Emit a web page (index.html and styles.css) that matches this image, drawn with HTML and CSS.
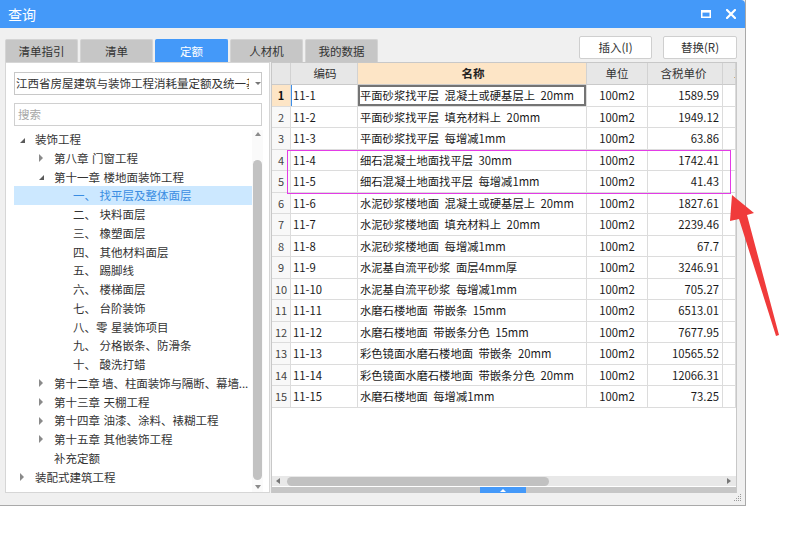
FILE: index.html
```html
<!DOCTYPE html>
<html lang="zh-CN">
<head>
<meta charset="utf-8">
<title>查询</title>
<link rel="stylesheet" href="styles.css">
</head>
<body>
<div class="window">
  <div class="titlebar">
    <span class="title">查询</span>
    <div class="win-btns">
      <svg class="ico" width="10" height="8" viewBox="0 0 10 8"><rect x="0.75" y="0.75" width="8.5" height="6.5" fill="none" stroke="#fff" stroke-width="1.5"/><rect x="0" y="0" width="10" height="2.6" fill="#fff"/></svg>
      <svg class="ico" width="10" height="10" viewBox="0 0 10 10"><path d="M1 1L9 9M9 1L1 9" stroke="#fff" stroke-width="2.2" stroke-linecap="square"/></svg>
    </div>
  </div>
  <div class="body">
    <div class="toolbar">
      <div class="tabs">
        <div class="tab">清单指引</div>
        <div class="tab">清单</div>
        <div class="tab active">定额</div>
        <div class="tab">人材机</div>
        <div class="tab">我的数据</div>
      </div>
      <div class="actions">
        <button class="btn">插入(I)</button>
        <button class="btn btn-wide">替换(R)</button>
      </div>
    </div>
    <div class="main">
      <div class="left">
        <div class="select">
          <span class="select-text">江西省房屋建筑与装饰工程消耗量定额及统一基价表</span>
          <span class="caret"></span>
        </div>
        <div class="search">搜索</div>
        <div class="tree">
          <div class="tree-list">
            <div class="node l0"><span class="tw"><i class="tri-open"></i></span><span class="lbl">装饰工程</span></div>
            <div class="node l1"><span class="tw"><i class="tri-closed"></i></span><span class="lbl">第八章 门窗工程</span></div>
            <div class="node l1"><span class="tw"><i class="tri-open"></i></span><span class="lbl">第十一章 楼地面装饰工程</span></div>
            <div class="node l2 selected"><span class="lbl">一、 找平层及整体面层</span></div>
            <div class="node l2"><span class="lbl">二、 块料面层</span></div>
            <div class="node l2"><span class="lbl">三、 橡塑面层</span></div>
            <div class="node l2"><span class="lbl">四、 其他材料面层</span></div>
            <div class="node l2"><span class="lbl">五、 踢脚线</span></div>
            <div class="node l2"><span class="lbl">六、 楼梯面层</span></div>
            <div class="node l2"><span class="lbl">七、 台阶装饰</span></div>
            <div class="node l2"><span class="lbl">八、零 星装饰项目</span></div>
            <div class="node l2"><span class="lbl">九、 分格嵌条、防滑条</span></div>
            <div class="node l2"><span class="lbl">十、 酸洗打蜡</span></div>
            <div class="node l1"><span class="tw"><i class="tri-closed"></i></span><span class="lbl tight">第十二章 墙、柱面装饰与隔断、幕墙...</span></div>
            <div class="node l1"><span class="tw"><i class="tri-closed"></i></span><span class="lbl">第十三章 天棚工程</span></div>
            <div class="node l1"><span class="tw"><i class="tri-closed"></i></span><span class="lbl">第十四章 油漆、涂料、裱糊工程</span></div>
            <div class="node l1"><span class="tw"><i class="tri-closed"></i></span><span class="lbl">第十五章 其他装饰工程</span></div>
            <div class="node l1"><span class="tw"></span><span class="lbl">补充定额</span></div>
            <div class="node l0"><span class="tw"><i class="tri-closed"></i></span><span class="lbl">装配式建筑工程</span></div>
          </div>
          <div class="vscroll">
            <i class="arr-up"></i>
            <div class="vthumb"></div>
            <i class="arr-down"></i>
          </div>
        </div>
      </div>
      <div class="right">
        <div class="grid">
          <div class="row head">
            <div class="c rn"></div>
            <div class="c code">编码</div>
            <div class="c name">名称</div>
            <div class="c unit">单位</div>
            <div class="c price">含税单价</div>
            <div class="c extra"><span class="extra-txt">工</span></div>
          </div>
          <div class="row current">
            <div class="c rn">1</div><div class="c code focus">11-1</div><div class="c name sel">平面砂浆找平层 混凝土或硬基层上 20mm</div><div class="c unit">100m2</div><div class="c price">1589.59</div><div class="c extra"></div>
          </div>
          <div class="row"><div class="c rn">2</div><div class="c code">11-2</div><div class="c name">平面砂浆找平层 填充材料上 20mm</div><div class="c unit">100m2</div><div class="c price">1949.12</div><div class="c extra"></div></div>
          <div class="row"><div class="c rn">3</div><div class="c code">11-3</div><div class="c name">平面砂浆找平层 每增减1mm</div><div class="c unit">100m2</div><div class="c price">63.86</div><div class="c extra"></div></div>
          <div class="row"><div class="c rn">4</div><div class="c code">11-4</div><div class="c name">细石混凝土地面找平层 30mm</div><div class="c unit">100m2</div><div class="c price">1742.41</div><div class="c extra"></div></div>
          <div class="row"><div class="c rn">5</div><div class="c code">11-5</div><div class="c name">细石混凝土地面找平层 每增减1mm</div><div class="c unit">100m2</div><div class="c price">41.43</div><div class="c extra"></div></div>
          <div class="row"><div class="c rn">6</div><div class="c code">11-6</div><div class="c name">水泥砂浆楼地面 混凝土或硬基层上 20mm</div><div class="c unit">100m2</div><div class="c price">1827.61</div><div class="c extra"></div></div>
          <div class="row"><div class="c rn">7</div><div class="c code">11-7</div><div class="c name">水泥砂浆楼地面 填充材料上 20mm</div><div class="c unit">100m2</div><div class="c price">2239.46</div><div class="c extra"></div></div>
          <div class="row"><div class="c rn">8</div><div class="c code">11-8</div><div class="c name">水泥砂浆楼地面 每增减1mm</div><div class="c unit">100m2</div><div class="c price">67.7</div><div class="c extra"></div></div>
          <div class="row"><div class="c rn">9</div><div class="c code">11-9</div><div class="c name">水泥基自流平砂浆 面层4mm厚</div><div class="c unit">100m2</div><div class="c price">3246.91</div><div class="c extra"></div></div>
          <div class="row"><div class="c rn">10</div><div class="c code">11-10</div><div class="c name">水泥基自流平砂浆 每增减1mm</div><div class="c unit">100m2</div><div class="c price">705.27</div><div class="c extra"></div></div>
          <div class="row"><div class="c rn">11</div><div class="c code">11-11</div><div class="c name">水磨石楼地面 带嵌条 15mm</div><div class="c unit">100m2</div><div class="c price">6513.01</div><div class="c extra"></div></div>
          <div class="row"><div class="c rn">12</div><div class="c code">11-12</div><div class="c name">水磨石楼地面 带嵌条分色 15mm</div><div class="c unit">100m2</div><div class="c price">7677.95</div><div class="c extra"></div></div>
          <div class="row"><div class="c rn">13</div><div class="c code">11-13</div><div class="c name">彩色镜面水磨石楼地面 带嵌条 20mm</div><div class="c unit">100m2</div><div class="c price">10565.52</div><div class="c extra"></div></div>
          <div class="row"><div class="c rn">14</div><div class="c code">11-14</div><div class="c name">彩色镜面水磨石楼地面 带嵌条分色 20mm</div><div class="c unit">100m2</div><div class="c price">12066.31</div><div class="c extra"></div></div>
          <div class="row"><div class="c rn">15</div><div class="c code">11-15</div><div class="c name">水磨石楼地面 每增减1mm</div><div class="c unit">100m2</div><div class="c price">73.25</div><div class="c extra"></div></div>
        </div>
        <div class="hscroll">
          <i class="arr-left"></i>
          <div class="hthumb"></div>
          <i class="arr-right"></i>
        </div>
        <div class="hgap"></div>
        <div class="splitter"><div class="split-btn"><i class="split-tri"></i></div></div>
      </div>
    </div>
    <div class="statusbar">
      <svg class="grip" width="8" height="8" viewBox="0 0 8 8">
        <rect x="6" y="0" width="1" height="1" fill="#9a9a9a"/>
        <rect x="4" y="2" width="1" height="1" fill="#9a9a9a"/><rect x="6" y="2" width="1" height="1" fill="#9a9a9a"/>
        <rect x="2" y="4" width="1" height="1" fill="#9a9a9a"/><rect x="4" y="4" width="1" height="1" fill="#9a9a9a"/><rect x="6" y="4" width="1" height="1" fill="#9a9a9a"/>
        <rect x="0" y="6" width="1" height="1" fill="#9a9a9a"/><rect x="2" y="6" width="1" height="1" fill="#9a9a9a"/><rect x="4" y="6" width="1" height="1" fill="#9a9a9a"/><rect x="6" y="6" width="1" height="1" fill="#9a9a9a"/>
      </svg>
    </div>
  </div>
  <div class="mark"></div>
</div>
<svg class="arrow" width="798" height="543" viewBox="0 0 798 543">
  <polygon points="732,195 754,213 747,215 779,335 776,336 739,219 730,221" fill="#f03b3b"/>
</svg>
</body>
</html>
```

FILE: styles.css
```css
* { box-sizing: border-box; }
html, body { margin: 0; padding: 0; }
body {
  width: 798px;
  height: 543px;
  overflow: hidden;
  position: relative;
  background: #fff;
  font-family: "Noto Sans CJK SC", "Microsoft YaHei", sans-serif;
  color: #333;
}

.window {
  position: relative;
  width: 746px;
  height: 506px;
  background: #f0f0f0;
  border-right: 1px solid #a9a9a9;
  border-bottom: 1px solid #a9a9a9;
  display: flex;
  flex-direction: column;
}

.titlebar {
  height: 28px;
  flex: none;
  background: #4499f9;
  border-top-right-radius: 4px;
  display: flex;
  align-items: center;
  justify-content: space-between;
  padding: 0 9px 0 8px;
  color: #fff;
}
.title { font-size: 14px; line-height: 28px; }
.win-btns { display: flex; align-items: center; gap: 15px; }
.ico { display: block; }

.body {
  flex: 1;
  display: flex;
  flex-direction: column;
  padding: 0 8px 0 5px;
}

.toolbar {
  height: 34px;
  flex: none;
  display: flex;
  justify-content: space-between;
}
.tabs { display: flex; gap: 2px; align-self: flex-end; }
.tab {
  width: 73px;
  height: 23px;
  background: #c6c6c6;
  border: 1px solid #d4d4d4;
  border-bottom: none;
  border-radius: 2px 2px 0 0;
  font-size: 11.5px;
  line-height: 22px;
  text-align: center;
  color: #333;
}
.tab.active { background: #4499f9; border-color: #4499f9; color: #fff; }

.actions { display: flex; gap: 11px; padding-top: 8px; }
.btn {
  width: 73px;
  height: 23px;
  padding: 0;
  background: #fff;
  border: 1px solid #cfcfcf;
  border-radius: 2px;
  font-family: inherit;
  font-size: 11.5px;
  color: #333;
  line-height: 21px;
}
.btn-wide { width: 74px; }

.main {
  height: 431px;
  flex: none;
  display: flex;
  gap: 1px;
}

/* left panel */
.left {
  width: 265px;
  flex: none;
  background: #fff;
  border: 1px solid #d6d6d6;
  padding: 9px 7px 0 8px;
  display: flex;
  flex-direction: column;
}
.select {
  height: 23px;
  flex: none;
  border: 1px solid #c8c8c8;
  display: flex;
  align-items: center;
  padding-left: 1px;
  position: relative;
}
.select-text {
  width: 233px;
  overflow: hidden;
  white-space: nowrap;
  font-size: 11.5px;
  color: #333;
  line-height: 21px;
}
.caret {
  width: 0; height: 0;
  margin-left: 6px;
  border-left: 3px solid transparent;
  border-right: 3px solid transparent;
  border-top: 3px solid #777;
}
.search {
  margin-top: 8px;
  height: 23px;
  flex: none;
  border: 1px solid #d0d0d0;
  padding-left: 3px;
  font-size: 11.5px;
  line-height: 21px;
  color: #a8a8a8;
}
.tree {
  margin-top: 4px;
  flex: 1;
  display: flex;
  width: 249px;
  min-height: 0;
}
.tree-list { width: 238px; flex: none; overflow: hidden; }
.node {
  height: 18.75px;
  display: flex;
  align-items: center;
  white-space: nowrap;
  font-size: 11.5px;
  color: #333;
}
.node .lbl {
  min-width: 0;
  overflow: hidden;
  line-height: 18.75px;
  word-spacing: 1px;
}
.node .lbl.tight { word-spacing: 0; letter-spacing: -0.1px; }
.node.l1 { padding-left: 19px; }
.node.l2 { padding-left: 59px; }
.node.selected { background: #cce8ff; }
.node.selected .lbl { color: #3a8de2; }
.tw {
  width: 21px;
  flex: none;
  height: 18px;
  display: flex;
  align-items: center;
  padding-left: 6px;
}
.tri-open {
  display: block;
  width: 0; height: 0;
  border-left: 5px solid transparent;
  border-bottom: 5px solid #5a5a5a;
  margin-top: 2px;
}
.tri-closed {
  display: block;
  width: 0; height: 0;
  border-top: 4px solid transparent;
  border-bottom: 4px solid transparent;
  border-left: 4px solid #8a8a8a;
}
.vscroll {
  width: 11px;
  flex: none;
  display: flex;
  flex-direction: column;
  align-items: center;
  padding-top: 2px;
  background: #fafafa;
}
.arr-up {
  display: block;
  width: 0; height: 0;
  border-left: 3.5px solid transparent;
  border-right: 3.5px solid transparent;
  border-bottom: 4px solid #8a8a8a;
}
.vthumb {
  margin-top: 24px;
  width: 9px;
  height: 320px;
  border-radius: 4.5px;
  background: #c2c2c2;
}
.arr-down {
  display: block;
  margin-top: 5px;
  width: 0; height: 0;
  border-left: 3.5px solid transparent;
  border-right: 3.5px solid transparent;
  border-top: 4px solid #8a8a8a;
}

/* right table */
.right {
  flex: 1;
  display: flex;
  flex-direction: column;
  border: 1px solid #c8c8c8;
  border-bottom: none;
  background: #fff;
  min-width: 0;
}
.grid { flex: 1; overflow: hidden; background: #fff; }
.row {
  display: grid;
  grid-template-columns: 19px 67px 229px 61px 75px 1fr;
  height: 21.5px;
}
.c {
  border-right: 1px solid #dcdcdc;
  border-bottom: 1px solid #dcdcdc;
  font-size: 11.3px;
  line-height: 20px;
  white-space: nowrap;
  overflow: hidden;
  color: #1a1a1a;
}
.row.head { height: 22px; background: #e7e7e7; }
.row.head .c {
  border-right-color: #d2d2d2;
  border-bottom-color: #cacaca;
  text-align: center;
  font-size: 11.5px;
  line-height: 21px;
  color: #333;
  word-spacing: 0;
}
.row.head .c.name { background: #fde5c6; font-weight: 700; color: #222; }
.row.head .c.extra { text-align: left; }
.extra-txt { padding-left: 11px; }
.c.rn { text-align: center; color: #444; background: #f8f8f8; font-size: 11px; }
.row.head .c.rn { background: #e7e7e7; }
.row.current .c.rn { background: #fde5c6; font-weight: 700; color: #111; }
.c.code { padding-left: 2px; }
.c.code.focus { box-shadow: inset 1px 0 0 #3d8fe8; }
.c.name { padding-left: 2px; word-spacing: 3px; }
.c.name.sel { box-shadow: inset 0 0 0 2px #747474; }
.c.unit { text-align: center; }
.c.price { text-align: right; padding-right: 3px; }

.hscroll {
  height: 10px;
  flex: none;
  background: #e8e8e8;
  display: flex;
  align-items: center;
  padding: 0 5px 0 4px;
}
.arr-left {
  display: block;
  width: 0; height: 0;
  border-top: 3.5px solid transparent;
  border-bottom: 3.5px solid transparent;
  border-right: 4px solid #777;
}
.hthumb {
  margin-left: 7px;
  width: 262px;
  height: 9px;
  border-radius: 4.5px;
  background: #c1c1c1;
}
.arr-right {
  display: block;
  margin-left: auto;
  width: 0; height: 0;
  border-top: 3.5px solid transparent;
  border-bottom: 3.5px solid transparent;
  border-left: 4px solid #777;
}
.hgap { height: 1px; flex: none; background: #fff; }
.splitter {
  height: 6px;
  flex: none;
  background: #c6c6c6;
  padding-left: 208px;
}
.split-btn {
  width: 46px;
  height: 6px;
  background: #4499f9;
  display: flex;
  justify-content: center;
  align-items: center;
}
.split-tri {
  display: block;
  width: 0; height: 0;
  border-left: 3px solid transparent;
  border-right: 3px solid transparent;
  border-bottom: 3px solid #fff;
}

.statusbar {
  height: 12px;
  flex: none;
  display: flex;
  justify-content: flex-end;
  align-items: flex-end;
  padding: 0 0 3px 0;
}
.grip { display: block; margin-right: -5px; }

/* annotation overlays */
.mark {
  position: absolute;
  left: 287px;
  top: 150px;
  width: 444px;
  height: 44px;
  border: 1px solid #e33be6;
  pointer-events: none;
}
.arrow {
  position: absolute;
  left: 0;
  top: 0;
  pointer-events: none;
}
```
